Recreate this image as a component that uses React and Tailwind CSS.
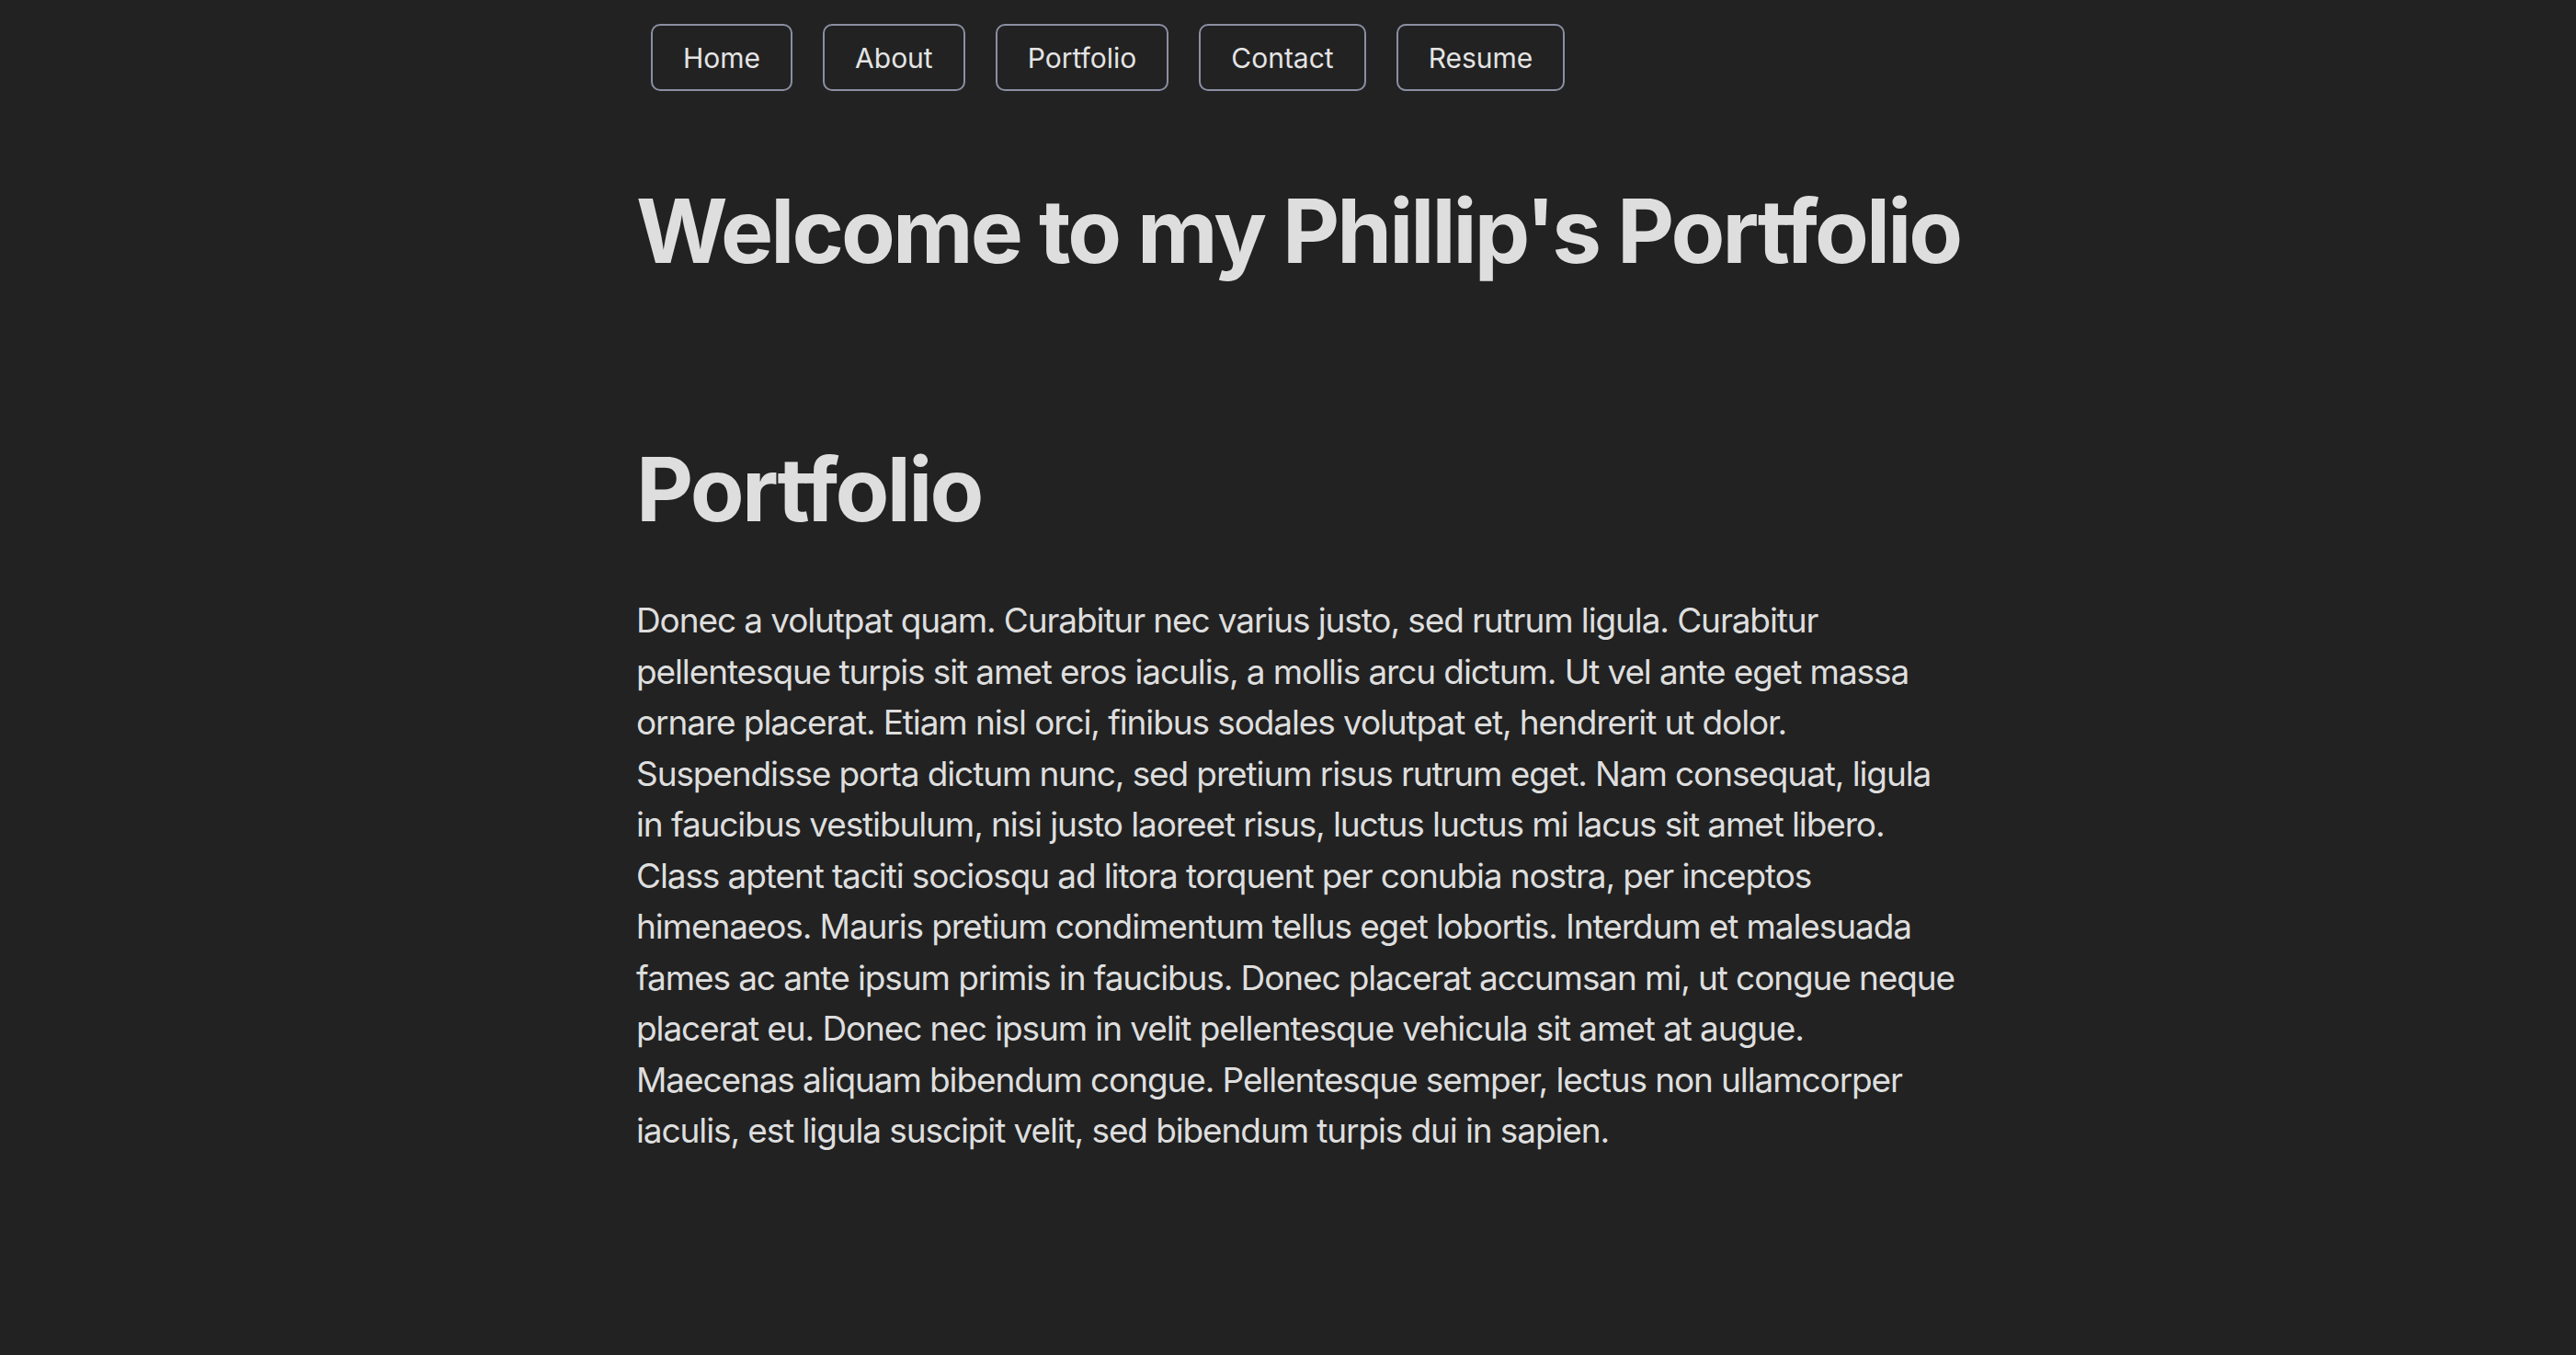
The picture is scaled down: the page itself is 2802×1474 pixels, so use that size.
import React from 'react';

const links = ['Home', 'About', 'Portfolio', 'Contact', 'Resume'];

const paragraph =
  'Donec a volutpat quam. Curabitur nec varius justo, sed rutrum ligula. Curabitur pellentesque turpis sit amet eros iaculis, a mollis arcu dictum. Ut vel ante eget massa ornare placerat. Etiam nisl orci, finibus sodales volutpat et, hendrerit ut dolor. Suspendisse porta dictum nunc, sed pretium risus rutrum eget. Nam consequat, ligula in faucibus vestibulum, nisi justo laoreet risus, luctus luctus mi lacus sit amet libero. Class aptent taciti sociosqu ad litora torquent per conubia nostra, per inceptos himenaeos. Mauris pretium condimentum tellus eget lobortis. Interdum et malesuada fames ac ante ipsum primis in faucibus. Donec placerat accumsan mi, ut congue neque placerat eu. Donec nec ipsum in velit pellentesque vehicula sit amet at augue. Maecenas aliquam bibendum congue. Pellentesque semper, lectus non ullamcorper iaculis, est ligula suscipit velit, sed bibendum turpis dui in sapien.';

const App = () => {
  return (
    <div className="min-h-screen bg-[#222222] text-[#dedede] font-['Inter',sans-serif] antialiased">
      <div className="ml-[692px] w-[1440px] pt-[26px] pb-24">
        {/* Nav */}
        <nav className="flex gap-[33px] pl-4">
          {links.map((link) => (
            <button
              key={link}
              className="h-[73px] px-[33px] flex items-center border-2 border-[#8b8fa3] rounded-[10px] text-[30px] leading-none text-[#e4e4e4]"
            >
              {link}
            </button>
          ))}
        </nav>

        {/* Header */}
        <h1 className="mt-[100px] text-[96px] leading-[1.1] font-bold tracking-[-0.03em] whitespace-nowrap">
          Welcome to my Phillip's Portfolio
        </h1>

        {/* Portfolio Section */}
        <section className="mt-[175px]">
          <h2 className="text-[96px] leading-[1.1] font-bold tracking-[-0.027em]">Portfolio</h2>
          <p className="mt-[62px] text-[37px] leading-[55.5px] tracking-[-0.03em]">{paragraph}</p>
        </section>
      </div>
    </div>
  );
};

export default App;
